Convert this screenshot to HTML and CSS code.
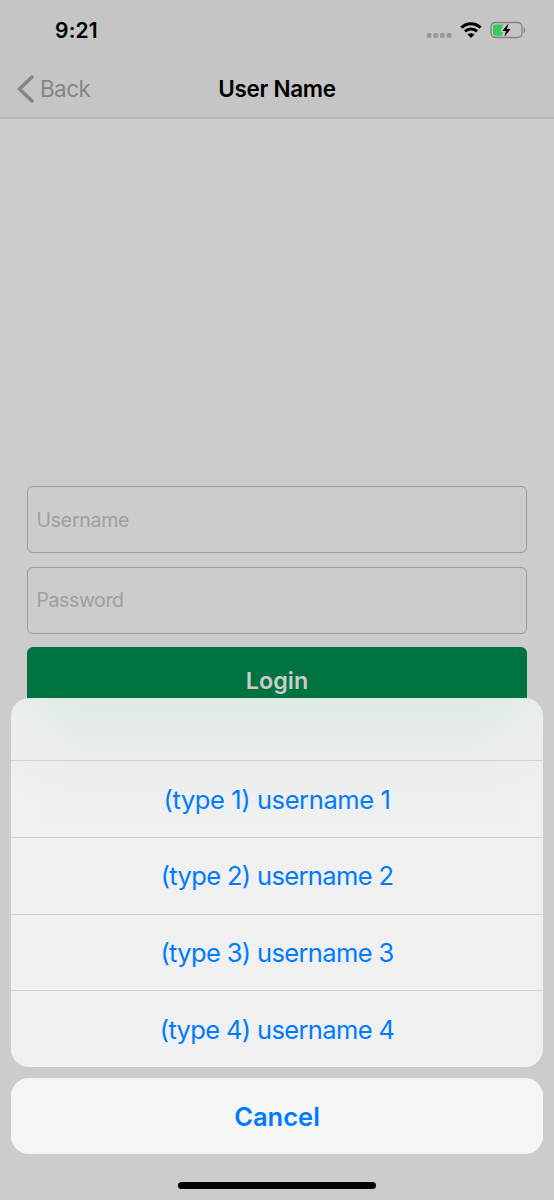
FILE: index.html
```html
<!DOCTYPE html>
<html lang="en">
<head>
<meta charset="utf-8">
<meta name="viewport" content="width=device-width">
<title>User Name</title>
<link rel="stylesheet" href="styles.css">
</head>
<body>
<div class="screen">
  <header class="header">
    <div class="status">
      <span class="time">9:21</span>
      <div class="indicators">
        <svg class="signal" width="26" height="6" viewBox="0 0 26 6"><g fill="#999"><rect x="0.7" y="0" width="5" height="5" rx="1.7"/><rect x="7.3" y="0" width="5" height="5" rx="1.7"/><rect x="13.9" y="0" width="5" height="5" rx="1.7"/><rect x="20.5" y="0" width="5" height="5" rx="1.7"/></g></svg>
        <svg class="wifi" width="22" height="16" viewBox="0 0 22 16"><g fill="none" stroke="#000" stroke-width="3.1"><path d="M1.4 5.7C6.9.4 15.1.4 20.6 5.7"/><path d="M5 9.4C8.4 6.2 13.6 6.2 17 9.4"/></g><path d="M11 16L7.5 12.5C9.5 10.7 12.5 10.7 14.5 12.5Z"/></svg>
        <svg class="battery" width="36" height="18" viewBox="0 0 36 18"><rect x="1" y="1.5" width="31" height="15" rx="4.4" fill="none" stroke="#828282" stroke-width="1.3"/><path d="M33.6 6V12.3C35.8 11.3 35.8 7 33.6 6Z" fill="#828282"/><path d="M5.2 3.6H13.2L10.7 9.7H13.2L11.7 14.7H5.2Q3 14.7 3 12.5V5.8Q3 3.6 5.2 3.6Z" fill="#34cc5a"/><path d="M18.6 2.2L12.3 10H16L14.2 15.9L20.6 8.1H16.9Z" fill="#000" stroke="#c6c5c5" stroke-width="2" paint-order="stroke"/></svg>
      </div>
    </div>
    <nav class="nav">
      <a class="back"><svg width="17" height="28" viewBox="0 0 17 28"><path d="M15 2L2.5 14L15 26" fill="none" stroke="#858585" stroke-width="3.5" stroke-linecap="round" stroke-linejoin="miter"/></svg><span>Back</span></a>
      <h1 class="title">User Name</h1>
    </nav>
  </header>
  <main class="form">
    <div class="field">Username</div>
    <div class="field password">Password</div>
    <div class="login"><span>Login</span></div>
  </main>
  <div class="overlay">
    <div class="sheet">
      <div class="sheet-title"></div>
      <div class="option"><span class="label one">(type 1) username 1</span></div>
      <div class="option"><span class="label">(type 2) username 2</span></div>
      <div class="option"><span class="label">(type 3) username 3</span></div>
      <div class="option"><span class="label">(type 4) username 4</span></div>
    </div>
    <div class="cancel"><span>Cancel</span></div>
    <div class="home"></div>
  </div>
</div>
</body>
</html>
```
FILE: styles.css
```css
* { box-sizing: border-box; }
body { margin: 0; font-family: Inter, "Liberation Sans", sans-serif; }
svg { display: block; flex: none; }
.screen { position: relative; width: 554px; height: 1200px; overflow: hidden; background: #ccc; }
.header { height: 119px; background: #c6c5c5; border-bottom: 2px solid #b8b8b8; }
.status { height: 59px; display: flex; justify-content: space-between; padding: 0 28px 0 55px; align-items: center; }
.time { font-size: 21px; font-weight: 600; line-height: 26px; letter-spacing: 0.2px; padding-top: 2px; }
.indicators { display: flex; align-items: center; }
.signal { margin-top: 12px; margin-right: 8px; }
.wifi { margin-right: 8px; }
.nav { height: 59px; display: grid; grid-template-columns: 1fr auto 1fr; align-items: center; }
.back { display: flex; align-items: center; gap: 6px; padding-left: 17px; color: #858585; font-size: 22.5px; letter-spacing: -0.6px; }
.title { margin: 0; font-size: 22.5px; font-weight: 600; letter-spacing: -0.3px; line-height: 28px; }
.form { display: flex; flex-direction: column; gap: 13.5px; padding: 367px 27px 0; }
.field { height: 67px; border: 1px solid #9f9f9f; box-shadow: 0 0 1px #aaa; border-radius: 6px; padding-left: 8.5px; display: flex; align-items: center; font-size: 19.5px; letter-spacing: -0.25px; color: #a0a0a0; }
.password { letter-spacing: -0.4px; }
.login { height: 67px; background: #007440; border-radius: 6px; display: flex; align-items: center; justify-content: center; color: #ccc; font-size: 23.3px; font-weight: 600; }
.overlay { position: absolute; left: 11px; right: 11px; bottom: 0; height: 502px; display: flex; flex-direction: column; align-items: center; }
.sheet, .cancel { width: 100%; border-radius: 18px; overflow: hidden; flex: none; }
.sheet { height: 369px; background: linear-gradient(90deg, rgba(240, 240, 240, .65), rgba(240, 240, 240, 0) 70px calc(100% - 70px), rgba(240, 240, 240, .55)), linear-gradient(#dcebe3 0, #e2ebe7 22px, #e9edea 56px, #eef0ef 100px, #f0f0f0 170px); }
.sheet-title { height: 62px; }
.option { height: 76.75px; border-top: 1px solid #cfd4d2; display: flex; align-items: center; justify-content: center; color: #007aff; font-size: 25.5px; padding-top: 0.5px; }
.label { letter-spacing: -0.64px; }
.one { letter-spacing: -0.4px; }
.cancel { height: 76px; margin-top: 11px; background: #f5f5f4; display: flex; align-items: center; justify-content: center; color: #007aff; font-size: 25.5px; font-weight: 600; padding-top: 1px; }
.home { width: 198px; height: 7px; border-radius: 4px; background: #000; margin-top: 28px; }
```
